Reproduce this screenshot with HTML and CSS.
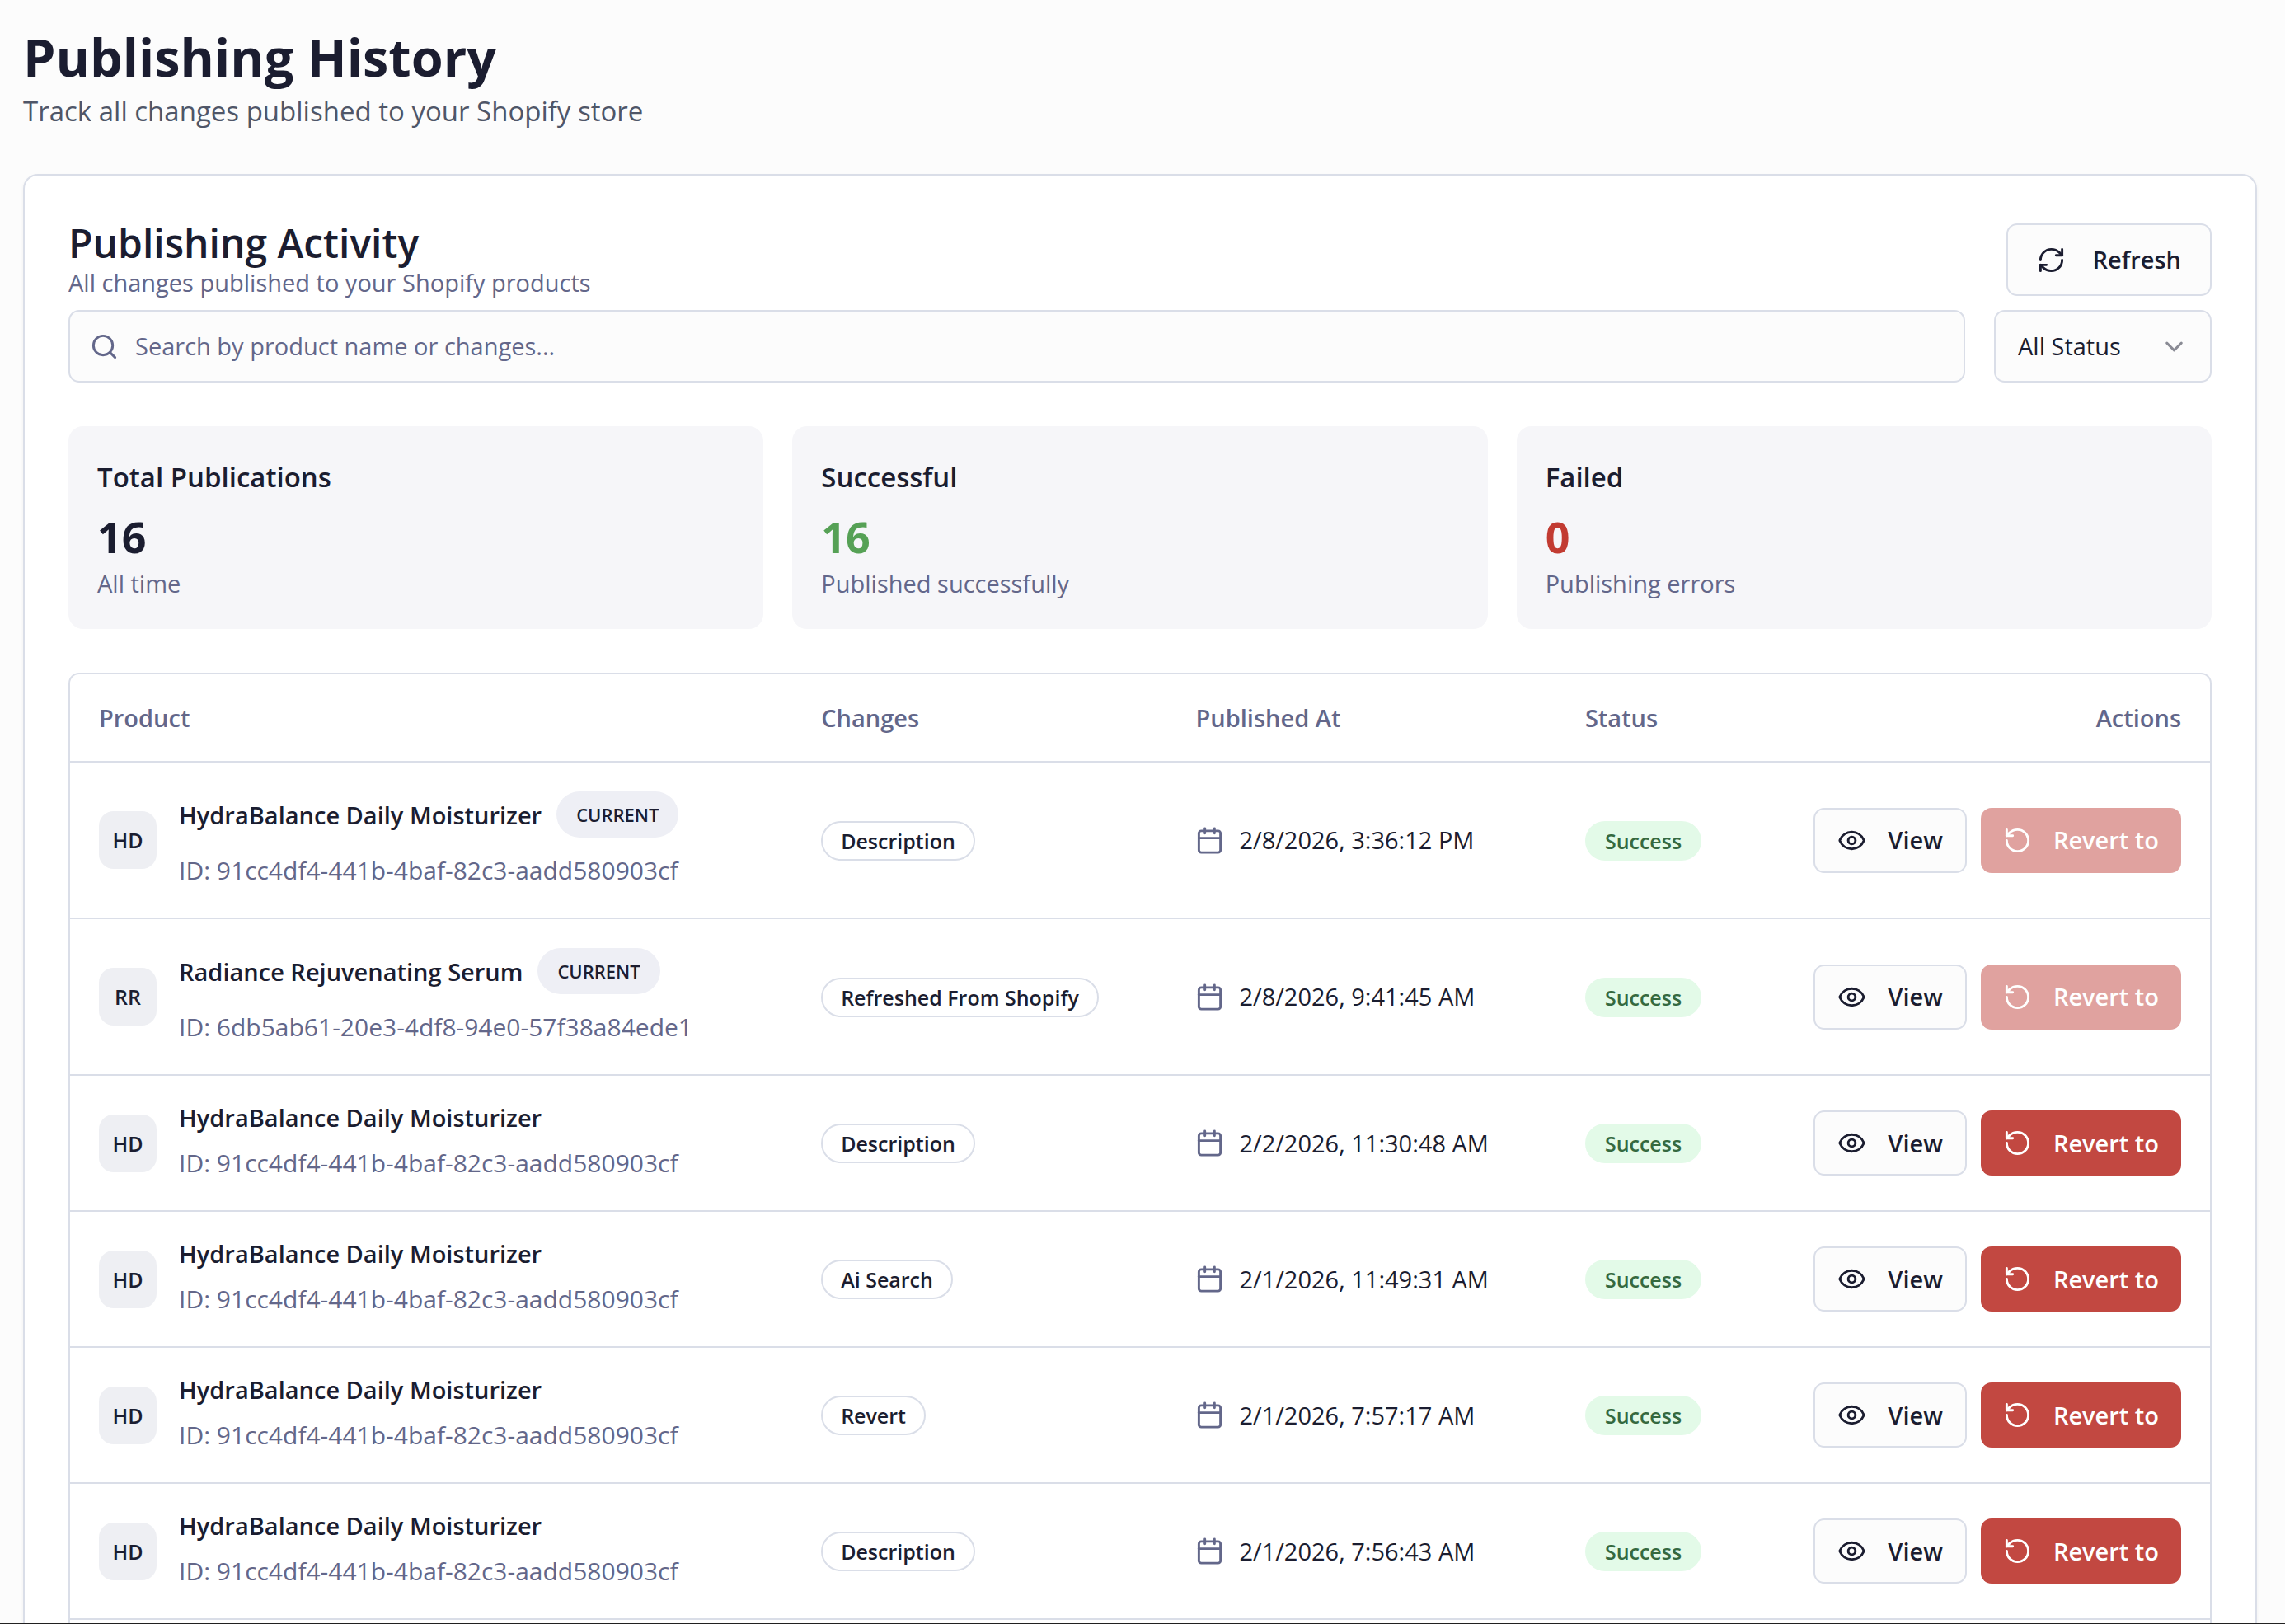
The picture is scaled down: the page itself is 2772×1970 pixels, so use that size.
FILE: index.html
```html
<!DOCTYPE html>
<html lang="en">
<head>
    <meta charset="UTF-8">
    <meta name="viewport" content="width=device-width, initial-scale=1.0">
    <title>Publishing History</title>
    <link rel="stylesheet" href="styles.css">
</head>
<body>
    <!-- Icon set -->
    <svg class="icon-sprite" aria-hidden="true">
        <symbol id="icon-refresh" viewBox="0 0 24 24">
            <path d="M3 12a9 9 0 0 1 9-9 9.75 9.75 0 0 1 6.74 2.74L21 8"/>
            <path d="M21 3v5h-5"/>
            <path d="M21 12a9 9 0 0 1-9 9 9.75 9.75 0 0 1-6.74-2.74L3 16"/>
            <path d="M8 16H3v5"/>
        </symbol>
        <symbol id="icon-search" viewBox="0 0 24 24">
            <circle cx="11" cy="11" r="8"/>
            <path d="m21 21-4.3-4.3"/>
        </symbol>
        <symbol id="icon-chevron" viewBox="0 0 24 24">
            <path d="m6 9 6 6 6-6"/>
        </symbol>
        <symbol id="icon-calendar" viewBox="0 0 24 24">
            <path d="M8 2v4"/>
            <path d="M16 2v4"/>
            <rect width="18" height="18" x="3" y="4" rx="2"/>
            <path d="M3 10h18"/>
        </symbol>
        <symbol id="icon-eye" viewBox="0 0 24 24">
            <path d="M2.062 12.348a1 1 0 0 1 0-.696 10.75 10.75 0 0 1 19.876 0 1 1 0 0 1 0 .696 10.75 10.75 0 0 1-19.876 0"/>
            <circle cx="12" cy="12" r="3"/>
        </symbol>
        <symbol id="icon-revert" viewBox="0 0 24 24">
            <path d="M3 12a9 9 0 1 0 9-9 9.75 9.75 0 0 0-6.74 2.74L3 8"/>
            <path d="M3 3v5h5"/>
        </symbol>
    </svg>

    <main class="page">
        <header class="page-header">
            <h1>Publishing History</h1>
            <p>Track all changes published to your Shopify store</p>
        </header>

        <section class="card">
            <div class="card-header">
                <div>
                    <h2>Publishing Activity</h2>
                    <p>All changes published to your Shopify products</p>
                </div>
                <button type="button" class="btn btn-outline btn-large"><svg class="icon"><use href="#icon-refresh"/></svg>Refresh</button>
            </div>

            <div class="filters">
                <label class="search">
                    <svg class="icon"><use href="#icon-search"/></svg>
                    <input type="search" placeholder="Search by product name or changes..." aria-label="Search publications">
                </label>
                <div class="status-filter">
                    <select aria-label="Status">
                        <option>All Status</option>
                    </select>
                    <svg class="icon"><use href="#icon-chevron"/></svg>
                </div>
            </div>

            <div class="stats">
                <div class="stat">
                    <h3>Total Publications</h3>
                    <div class="stat-value">16</div>
                    <p>All time</p>
                </div>
                <div class="stat">
                    <h3>Successful</h3>
                    <div class="stat-value stat-success">16</div>
                    <p>Published successfully</p>
                </div>
                <div class="stat">
                    <h3>Failed</h3>
                    <div class="stat-value stat-failed">0</div>
                    <p>Publishing errors</p>
                </div>
            </div>

            <div class="table-wrap">
                <table>
                    <thead>
                        <tr>
                            <th class="col-product">Product</th>
                            <th class="col-changes">Changes</th>
                            <th class="col-date">Published At</th>
                            <th class="col-status">Status</th>
                            <th class="col-actions">Actions</th>
                        </tr>
                    </thead>
                    <tbody>
                        <tr>
                            <td>
                                <div class="product">
                                    <span class="avatar">HD</span>
                                    <div class="product-info">
                                        <div class="product-name">HydraBalance Daily Moisturizer <span class="current">CURRENT</span></div>
                                        <div class="product-id">ID: 91cc4df4-441b-4baf-82c3-aadd580903cf</div>
                                    </div>
                                </div>
                            </td>
                            <td><span class="badge">Description</span></td>
                            <td><div class="date"><svg class="icon"><use href="#icon-calendar"/></svg>2/8/2026, 3:36:12 PM</div></td>
                            <td><span class="badge badge-success">Success</span></td>
                            <td>
                                <div class="actions">
                                    <button type="button" class="btn btn-outline"><svg class="icon"><use href="#icon-eye"/></svg>View</button>
                                    <button type="button" class="btn btn-danger" disabled><svg class="icon"><use href="#icon-revert"/></svg>Revert to</button>
                                </div>
                            </td>
                        </tr>
                        <tr>
                            <td>
                                <div class="product">
                                    <span class="avatar">RR</span>
                                    <div class="product-info">
                                        <div class="product-name">Radiance Rejuvenating Serum <span class="current">CURRENT</span></div>
                                        <div class="product-id">ID: 6db5ab61-20e3-4df8-94e0-57f38a84ede1</div>
                                    </div>
                                </div>
                            </td>
                            <td><span class="badge">Refreshed From Shopify</span></td>
                            <td><div class="date"><svg class="icon"><use href="#icon-calendar"/></svg>2/8/2026, 9:41:45 AM</div></td>
                            <td><span class="badge badge-success">Success</span></td>
                            <td>
                                <div class="actions">
                                    <button type="button" class="btn btn-outline"><svg class="icon"><use href="#icon-eye"/></svg>View</button>
                                    <button type="button" class="btn btn-danger" disabled><svg class="icon"><use href="#icon-revert"/></svg>Revert to</button>
                                </div>
                            </td>
                        </tr>
                        <tr>
                            <td>
                                <div class="product">
                                    <span class="avatar">HD</span>
                                    <div class="product-info">
                                        <div class="product-name">HydraBalance Daily Moisturizer</div>
                                        <div class="product-id">ID: 91cc4df4-441b-4baf-82c3-aadd580903cf</div>
                                    </div>
                                </div>
                            </td>
                            <td><span class="badge">Description</span></td>
                            <td><div class="date"><svg class="icon"><use href="#icon-calendar"/></svg>2/2/2026, 11:30:48 AM</div></td>
                            <td><span class="badge badge-success">Success</span></td>
                            <td>
                                <div class="actions">
                                    <button type="button" class="btn btn-outline"><svg class="icon"><use href="#icon-eye"/></svg>View</button>
                                    <button type="button" class="btn btn-danger"><svg class="icon"><use href="#icon-revert"/></svg>Revert to</button>
                                </div>
                            </td>
                        </tr>
                        <tr>
                            <td>
                                <div class="product">
                                    <span class="avatar">HD</span>
                                    <div class="product-info">
                                        <div class="product-name">HydraBalance Daily Moisturizer</div>
                                        <div class="product-id">ID: 91cc4df4-441b-4baf-82c3-aadd580903cf</div>
                                    </div>
                                </div>
                            </td>
                            <td><span class="badge">Ai Search</span></td>
                            <td><div class="date"><svg class="icon"><use href="#icon-calendar"/></svg>2/1/2026, 11:49:31 AM</div></td>
                            <td><span class="badge badge-success">Success</span></td>
                            <td>
                                <div class="actions">
                                    <button type="button" class="btn btn-outline"><svg class="icon"><use href="#icon-eye"/></svg>View</button>
                                    <button type="button" class="btn btn-danger"><svg class="icon"><use href="#icon-revert"/></svg>Revert to</button>
                                </div>
                            </td>
                        </tr>
                        <tr>
                            <td>
                                <div class="product">
                                    <span class="avatar">HD</span>
                                    <div class="product-info">
                                        <div class="product-name">HydraBalance Daily Moisturizer</div>
                                        <div class="product-id">ID: 91cc4df4-441b-4baf-82c3-aadd580903cf</div>
                                    </div>
                                </div>
                            </td>
                            <td><span class="badge">Revert</span></td>
                            <td><div class="date"><svg class="icon"><use href="#icon-calendar"/></svg>2/1/2026, 7:57:17 AM</div></td>
                            <td><span class="badge badge-success">Success</span></td>
                            <td>
                                <div class="actions">
                                    <button type="button" class="btn btn-outline"><svg class="icon"><use href="#icon-eye"/></svg>View</button>
                                    <button type="button" class="btn btn-danger"><svg class="icon"><use href="#icon-revert"/></svg>Revert to</button>
                                </div>
                            </td>
                        </tr>
                        <tr>
                            <td>
                                <div class="product">
                                    <span class="avatar">HD</span>
                                    <div class="product-info">
                                        <div class="product-name">HydraBalance Daily Moisturizer</div>
                                        <div class="product-id">ID: 91cc4df4-441b-4baf-82c3-aadd580903cf</div>
                                    </div>
                                </div>
                            </td>
                            <td><span class="badge">Description</span></td>
                            <td><div class="date"><svg class="icon"><use href="#icon-calendar"/></svg>2/1/2026, 7:56:43 AM</div></td>
                            <td><span class="badge badge-success">Success</span></td>
                            <td>
                                <div class="actions">
                                    <button type="button" class="btn btn-outline"><svg class="icon"><use href="#icon-eye"/></svg>View</button>
                                    <button type="button" class="btn btn-danger"><svg class="icon"><use href="#icon-revert"/></svg>Revert to</button>
                                </div>
                            </td>
                        </tr>
                    </tbody>
                </table>
            </div>
        </section>
    </main>
</body>
</html>
```
FILE: styles.css
```css
:root {
    --text: #1b1d30;
    --muted: #63678a;
    --border: #dadee8;
    --surface: #fcfcfc;
    --danger: #c24841;
}

* {
    box-sizing: border-box;
}

body {
    margin: 0;
    background: var(--surface);
    color: var(--text);
    font-family: "Segoe UI", "Open Sans", sans-serif;
    font-size: 29px;
    line-height: 44px;
}

h1, h2, h3, p {
    margin: 0;
}

/* Icons */
.icon-sprite {
    display: none;
}

.icon {
    width: 35px;
    height: 35px;
    flex-shrink: 0;
    fill: none;
    stroke: currentColor;
    stroke-width: 2;
    stroke-linecap: round;
    stroke-linejoin: round;
}

/* Page */
.page {
    display: flex;
    flex-direction: column;
    min-height: 100vh;
    padding: 28px 34px 0 28px;
    border-bottom: 1px solid #222;
}

.page-header {
    margin-bottom: 51px;
}

.page-header h1 {
    font-size: 63px;
    font-weight: 700;
    line-height: 82px;
}

.page-header p {
    color: #4f5668;
    font-size: 33px;
    line-height: 50px;
}

.card {
    display: flex;
    flex-direction: column;
    flex: 1;
    padding: 54px 53px 0;
    background: #fff;
    border: 2px solid var(--border);
    border-bottom: 0;
    border-radius: 18px 18px 0 0;
    box-shadow: 0 2px 4px rgba(0, 0, 0, 0.05);
}

.card-header {
    display: flex;
    justify-content: space-between;
    align-items: center;
    margin-bottom: 13px;
}

.card-header h2 {
    font-size: 48px;
    font-weight: 600;
    line-height: 56px;
}

.card-header p {
    color: var(--muted);
    line-height: 40px;
}

/* Buttons */
.btn {
    display: inline-flex;
    align-items: center;
    gap: 26px;
    height: 79px;
    padding: 0 27px;
    border: 2px solid transparent;
    border-radius: 13px;
    font: inherit;
    font-weight: 600;
    white-space: nowrap;
    cursor: pointer;
}

.btn-outline {
    background: var(--surface);
    border-color: var(--border);
    color: var(--text);
}

.btn-danger {
    background: var(--danger);
    border: 0;
    color: #fff;
}

.btn:disabled {
    opacity: 0.5;
    cursor: default;
}

.btn-large {
    gap: 33px;
    height: 88px;
    padding: 0 35px;
}

/* Search and status filter */
.filters {
    display: flex;
    gap: 35px;
    margin-bottom: 53px;
}

.search {
    display: flex;
    flex: 1;
    align-items: center;
    gap: 20px;
    height: 88px;
    padding: 0 24px;
    background: var(--surface);
    border: 2px solid var(--border);
    border-radius: 13px;
    color: var(--muted);
}

.search input {
    flex: 1;
    padding: 0;
    background: none;
    border: 0;
    outline: 0;
    color: var(--text);
    font: inherit;
}

.search input::placeholder {
    color: var(--muted);
    opacity: 1;
}

.status-filter {
    position: relative;
    width: 264px;
}

.status-filter select {
    width: 100%;
    height: 88px;
    padding: 0 27px;
    appearance: none;
    background: var(--surface);
    border: 2px solid var(--border);
    border-radius: 13px;
    color: var(--text);
    font: inherit;
}

.status-filter .icon {
    position: absolute;
    top: 27px;
    right: 28px;
    opacity: 0.5;
    pointer-events: none;
}

/* Totals */
.stats {
    display: grid;
    grid-template-columns: repeat(3, 1fr);
    gap: 35px;
    margin-bottom: 53px;
}

.stat {
    padding: 35px;
    background: #f6f6f9;
    border-radius: 18px;
}

.stat h3 {
    margin-bottom: 8px;
    font-size: 33px;
    font-weight: 600;
    line-height: 54px;
}

.stat-value {
    font-size: 52px;
    font-weight: 700;
    line-height: 74px;
}

.stat-success {
    color: #56a156;
}

.stat-failed {
    color: #c23b32;
}

.stat p {
    color: var(--muted);
    line-height: 40px;
}

/* History table */
.table-wrap {
    flex: 1;
    border: 2px solid var(--border);
    border-bottom: 0;
    border-radius: 13px 13px 0 0;
}

table {
    width: 100%;
    border-collapse: separate;
    border-spacing: 0;
    table-layout: fixed;
}

th {
    height: 107px;
    padding: 0 35px;
    border-bottom: 2px solid var(--border);
    color: var(--muted);
    font-weight: 600;
    text-align: left;
}

td {
    padding: 35px;
    border-bottom: 2px solid var(--border);
    vertical-align: middle;
}

.col-product {
    width: 33.75%;
}

.col-changes {
    width: 17.5%;
}

.col-date {
    width: 18.2%;
}

.col-status {
    width: 10%;
}

.col-actions {
    text-align: right;
}

.product {
    display: flex;
    align-items: center;
    gap: 27px;
}

.avatar {
    display: flex;
    align-items: center;
    justify-content: center;
    width: 70px;
    height: 70px;
    background: #eeeff3;
    border-radius: 18px;
    font-size: 25px;
    font-weight: 600;
}

.product-name {
    display: flex;
    align-items: center;
    gap: 18px;
    margin-bottom: 18px;
    font-weight: 600;
    line-height: 31px;
    white-space: nowrap;
}

.product-id {
    color: var(--muted);
    font-size: 30px;
    white-space: nowrap;
}

.current {
    padding: 13px 24px;
    background: #eeeff5;
    border-radius: 28px;
    font-size: 22px;
    line-height: 30px;
}

.badge {
    display: inline-block;
    padding: 0 22px;
    border: 2px solid var(--border);
    border-radius: 24px;
    font-size: 25px;
    font-weight: 600;
    vertical-align: middle;
    white-space: nowrap;
}

.badge-success {
    background: #e3fae8;
    border-color: #e3fae8;
    color: #35693f;
}

.date {
    display: flex;
    align-items: center;
    gap: 18px;
    white-space: nowrap;
}

.date .icon {
    color: var(--muted);
}

.actions {
    display: flex;
    justify-content: flex-end;
    gap: 17px;
}
```
